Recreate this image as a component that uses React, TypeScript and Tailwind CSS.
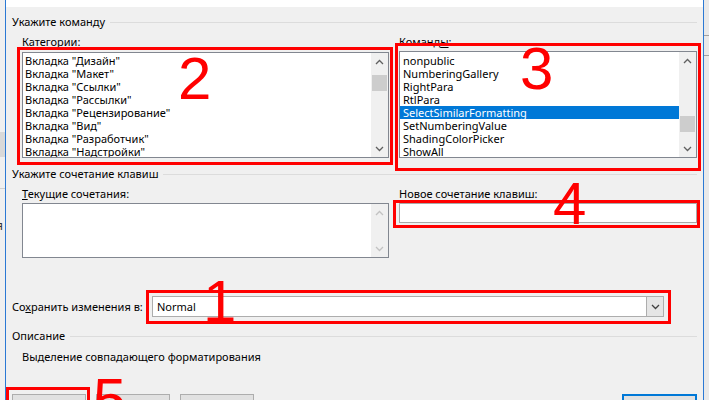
import React from "react"

const categories = [
  'Вкладка "Дизайн"',
  'Вкладка "Макет"',
  'Вкладка "Ссылки"',
  'Вкладка "Рассылки"',
  'Вкладка "Рецензирование"',
  'Вкладка "Вид"',
  'Вкладка "Разработчик"',
  'Вкладка "Надстройки"',
]

const commands = [
  "nonpublic",
  "NumberingGallery",
  "RightPara",
  "RtlPara",
  "SelectSimilarFormatting",
  "SetNumberingValue",
  "ShadingColorPicker",
  "ShowAll",
]

function Chevron({ dir, color = "#606060" }: { dir: "up" | "down"; color?: string }) {
  return (
    <svg width="9" height="6" viewBox="0 0 9 6" fill="none" stroke={color} strokeWidth="1.3">
      {dir === "up" ? <polyline points="1,5 4.5,1.5 8,5" /> : <polyline points="1,1 4.5,4.5 8,1" />}
    </svg>
  )
}

function Scrollbar({ thumbTop, disabled }: { thumbTop?: number; disabled?: boolean }) {
  const color = disabled ? "#c2c2c2" : "#606060"
  return (
    <div className="flex w-[17px] shrink-0 flex-col bg-[#f0f0f0]">
      <div className="flex h-[17px] shrink-0 items-center justify-center">
        <Chevron dir="up" color={color} />
      </div>
      <div className="flex-1">
        {thumbTop !== undefined && (
          <div className="mx-[1px] h-[16px] bg-[#cdcdcd]" style={{ marginTop: thumbTop }} />
        )}
      </div>
      <div className="flex h-[17px] shrink-0 items-center justify-center">
        <Chevron dir="down" color={color} />
      </div>
    </div>
  )
}

function SectionHeader({ title }: { title: string }) {
  return (
    <div className="flex h-[16px] items-center gap-[5px] pr-[6px]">
      <span className="whitespace-nowrap leading-[16px]">{title}</span>
      <div className="h-px flex-1 bg-[#dcdcdc]" />
    </div>
  )
}

function RedBox({ className }: { className: string }) {
  return <div className={"pointer-events-none absolute border-[3px] border-[#ff0000] " + className} />
}

function RedNum({ n, className }: { n: string; className: string }) {
  return (
    <div className={"pointer-events-none absolute font-['Liberation_Sans',Arial,sans-serif] text-[60px] leading-none text-[#ff0000] " + className}>
      {n}
    </div>
  )
}

export default function App() {
  return (
    <div className="relative flex h-[400px] w-[709px] overflow-hidden bg-[#f0f0f0] font-['Noto_Sans',sans-serif] text-[11px] text-black">
      {/* window behind, left */}
      <div className="relative w-[5px] shrink-0 overflow-hidden bg-[#f0f0f0]">
        <div className="absolute left-0 top-[132px] h-[25px] w-[5px] bg-[#d9d9d9]" />
        <div className="absolute left-0 top-[188px] h-px w-[5px] bg-[#cfcfcf]" />
        <div className="absolute left-[-4px] top-[217px] text-[12px] text-[#333]">я</div>
      </div>

      {/* dialog */}
      <div className="block w-[699px] shrink-0 border-x border-[#2b79d4]">
        <div className="h-[7px] bg-white" />

        <div className="flex flex-col pl-[6px]">
          <div className="mt-[7px]">
            <SectionHeader title="Укажите команду" />
          </div>

          <div className="flex gap-[10px] pl-[10px]">
            <div className="flex w-[367px] flex-col">
              <div className="mt-[4px] h-[16px] leading-[16px]">Категории:</div>
              <div className="mt-[2px] flex h-[106px] border border-[#828790] bg-white">
                <div className="flex-1 overflow-hidden pt-[1px]">
                  {categories.map((c) => (
                    <div key={c} className="h-[13px] whitespace-nowrap pl-[2px] leading-[13px]">
                      {c}
                    </div>
                  ))}
                </div>
                <Scrollbar thumbTop={5} />
              </div>
            </div>

            <div className="flex w-[298px] flex-col">
              <div className="mt-[4px] h-[16px] leading-[16px]">
                Команд<span className="underline">ы</span>:
              </div>
              <div className="mt-[1px] flex h-[107px] border border-[#828790] bg-white">
                <div className="flex-1 overflow-hidden pt-[2px]">
                  {commands.map((c) => (
                    <div
                      key={c}
                      className={
                        "h-[13px] whitespace-nowrap pl-[3px] leading-[13px] " +
                        (c === "SelectSimilarFormatting" ? "bg-[#0078d7] text-white" : "")
                      }
                    >
                      {c}
                    </div>
                  ))}
                </div>
                <Scrollbar thumbTop={47} />
              </div>
            </div>
          </div>

          <div className="mt-[8px]">
            <SectionHeader title="Укажите сочетание клавиш" />
          </div>

          <div className="flex gap-[10px] pl-[10px]">
            <div className="flex w-[367px] flex-col">
              <div className="mt-[4px] h-[16px] leading-[16px]">
                <span className="underline">Т</span>екущие сочетания:
              </div>
              <div className="mt-[1px] flex h-[55px] border border-[#828790] bg-white">
                <div className="flex-1" />
                <Scrollbar disabled />
              </div>
            </div>
            <div className="flex w-[298px] flex-col">
              <div className="mt-[4px] h-[16px] leading-[16px]">Новое сочетание клавиш:</div>
              <div className="mt-[1px] h-[20px] border border-[#a9a9a9] bg-white" />
            </div>
          </div>

          <div className="mt-[38px] flex h-[21px] items-center">
            <div className="w-[140px] whitespace-nowrap leading-[16px]">
              Со<span className="underline">х</span>ранить изменения в:
            </div>
            <div className="flex h-[21px] w-[512px] items-stretch border border-[#adadad] bg-white">
              <div className="flex-1 pl-[4px] leading-[19px]">Normal</div>
              <div className="flex w-[17px] items-center justify-center border-l border-[#adadad] bg-[#e5e5e5]">
                <Chevron dir="down" color="#404040" />
              </div>
            </div>
          </div>

          <div className="mt-[11px]">
            <SectionHeader title="Описание" />
          </div>
          <div className="mt-[5px] h-[16px] pl-[10px] leading-[16px]">
            Выделение совпадающего форматирования
          </div>

          <div className="mt-[29px] flex pr-[6px]">
            <div className="h-[23px] w-[74px] border border-[#adadad] bg-[#e1e1e1]" />
            <div className="ml-[10px] h-[23px] w-[74px] border border-[#adadad] bg-[#e1e1e1]" />
            <div className="ml-[10px] h-[23px] w-[74px] border border-[#adadad] bg-[#e1e1e1]" />
            <div className="flex-1" />
            <div className="h-[23px] w-[75px] border-2 border-[#0078d7] bg-[#e1e1e1]" />
          </div>
        </div>
      </div>

      {/* window behind, right */}
      <div className="relative w-[5px] shrink-0 overflow-hidden bg-[#e9e9e9]">
        <div className="absolute left-0 top-[35px] h-px w-[5px] bg-[#a0a0a0]" />
        <div className="absolute left-0 top-[55px] h-px w-[5px] bg-[#a0a0a0]" />
      </div>

      {/* annotations */}
      <RedBox className="left-[17px] top-[47px] h-[118px] w-[376px]" />
      <RedBox className="left-[395px] top-[43px] h-[128px] w-[306px]" />
      <RedBox className="left-[393px] top-[200px] h-[28px] w-[307px]" />
      <RedBox className="left-[146px] top-[290px] h-[34px] w-[525px]" />
      <RedBox className="left-[6px] top-[387px] h-[20px] w-[84px]" />

      <RedNum n="2" className="left-[178px] top-[49px]" />
      <RedNum n="3" className="left-[520px] top-[39px]" />
      <RedNum n="4" className="left-[553px] top-[174px]" />
      <RedNum n="1" className="left-[203px] top-[272px]" />
      <RedNum n="5" className="left-[93px] top-[370px]" />
    </div>
  )
}
